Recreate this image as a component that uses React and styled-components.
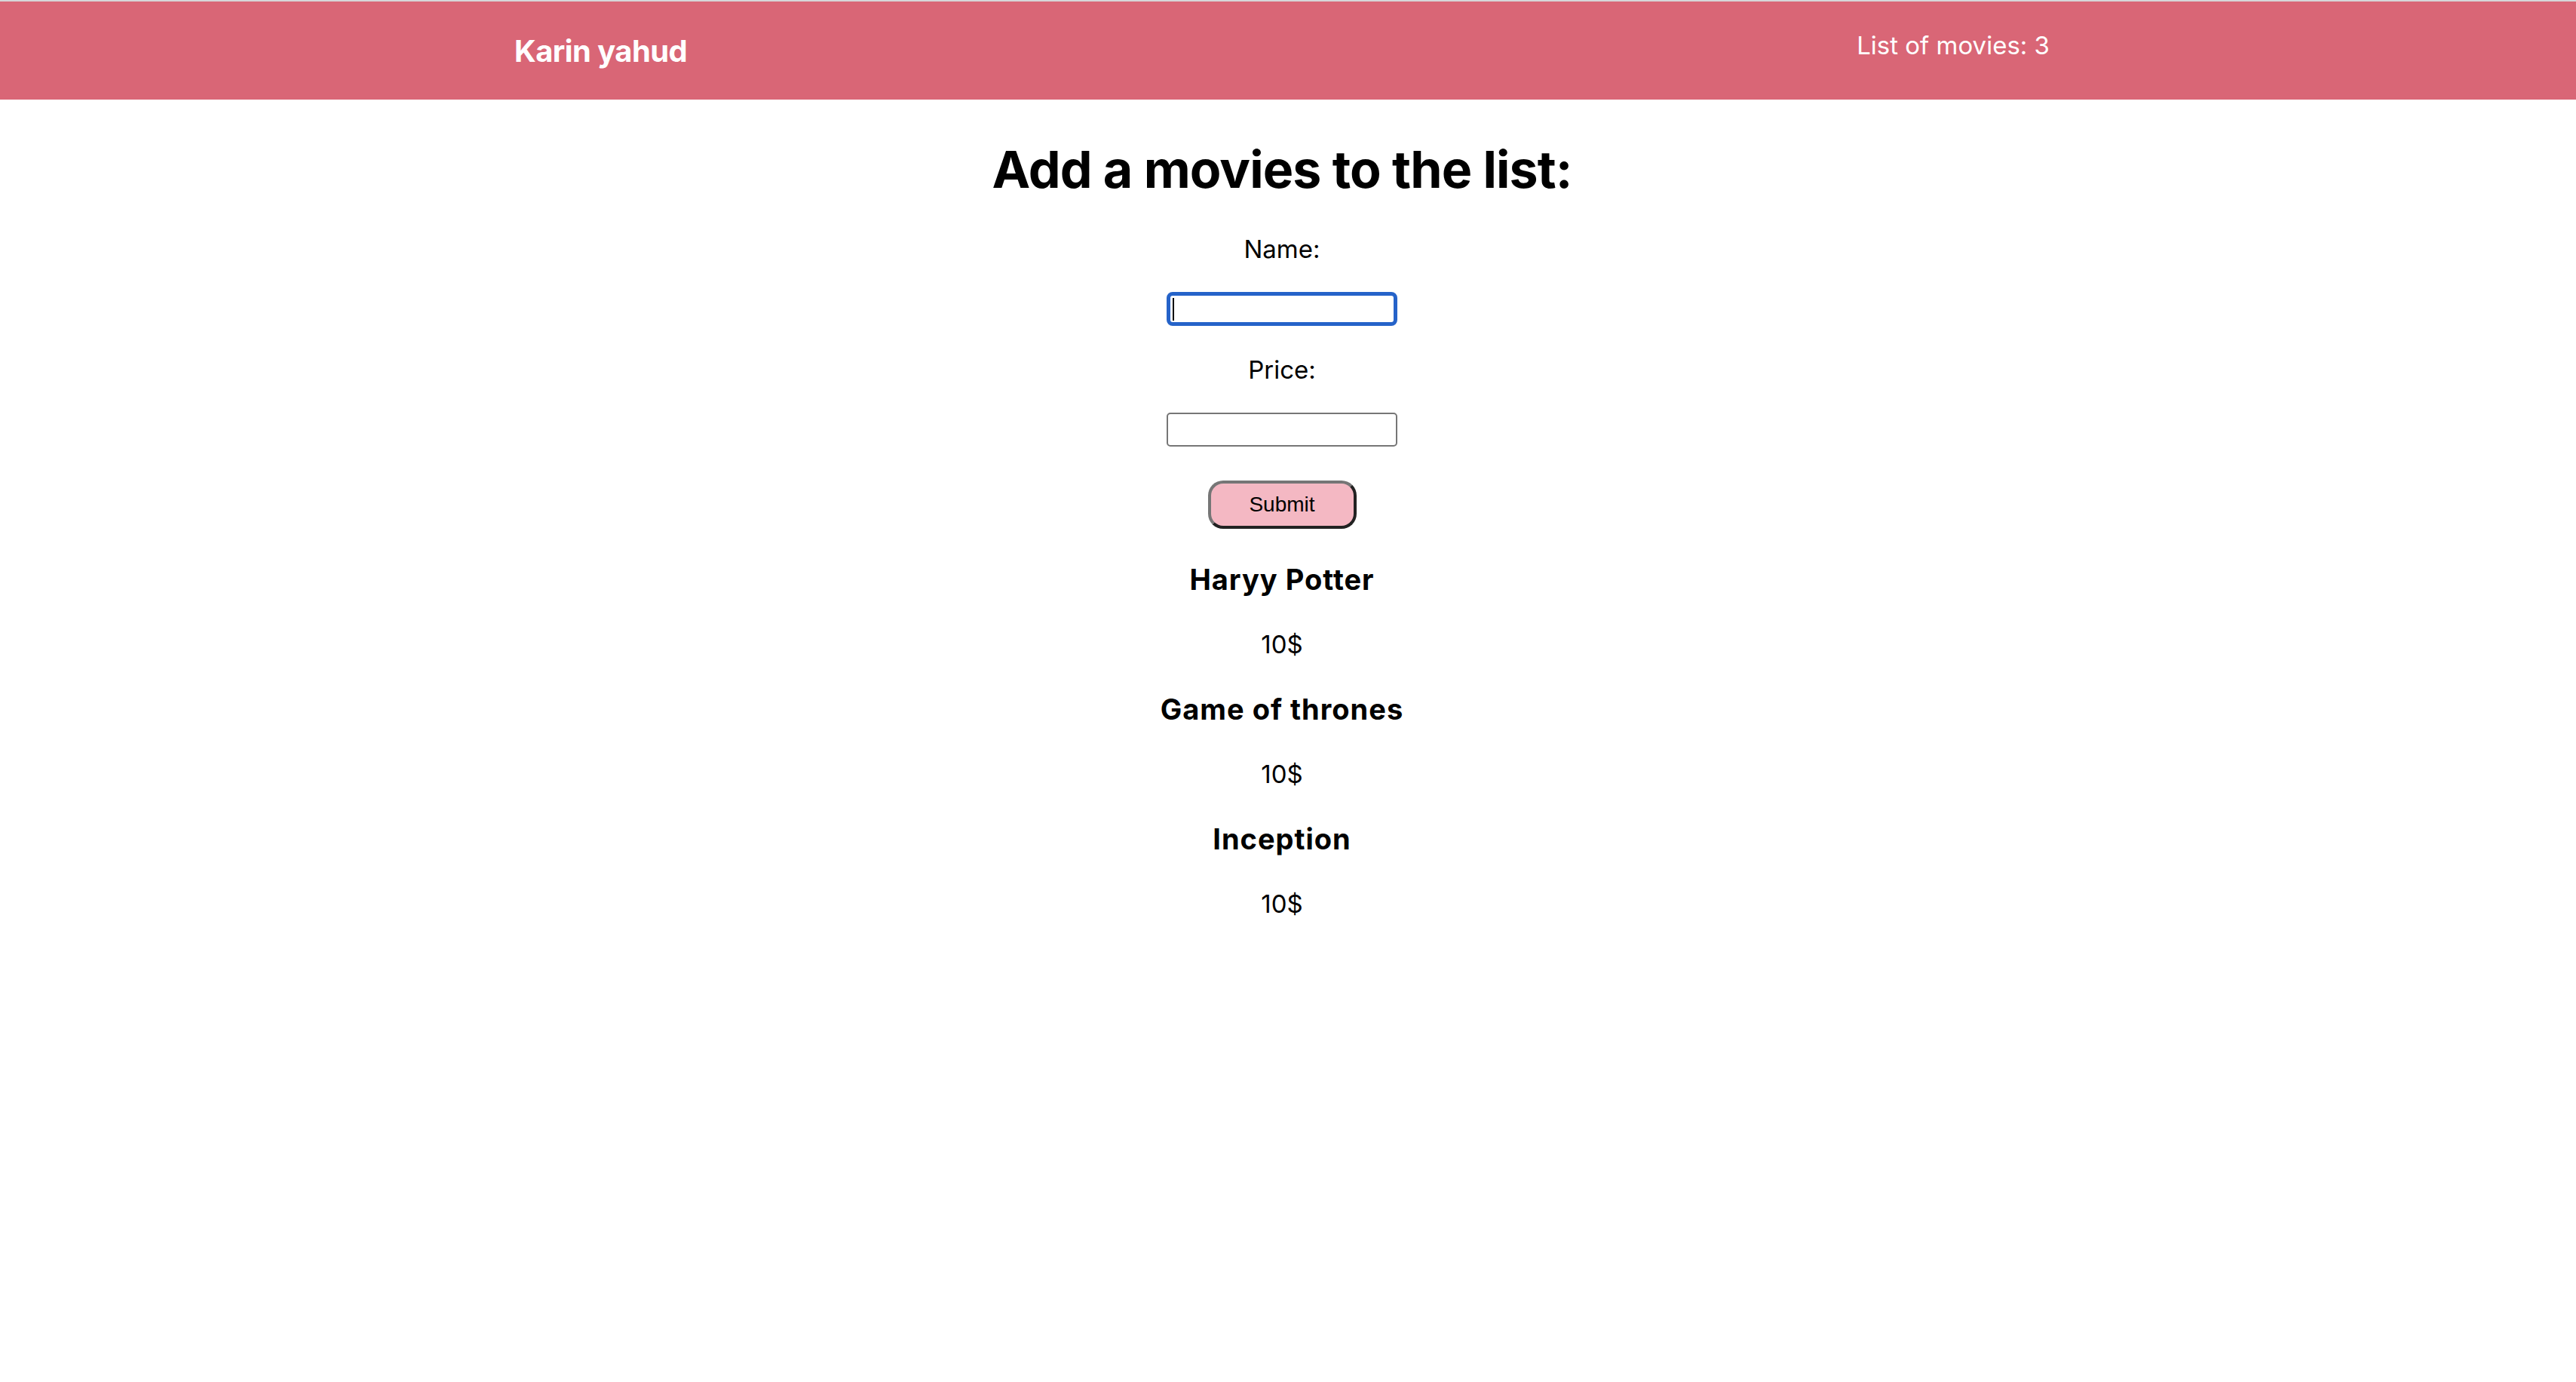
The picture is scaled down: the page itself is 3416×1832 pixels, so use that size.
import React from "react";
import styled, { createGlobalStyle } from "styled-components";

const GlobalStyle = createGlobalStyle`
  html, body {
    margin: 0;
    padding: 0;
    background: #ffffff;
  }
  body {
    font-family: Inter, "Noto Sans", sans-serif;
    color: #000000;
  }
  * { box-sizing: border-box; }
`;

const Page = styled.div`
  min-height: 1832px;
  background: #ffffff;
`;

const Header = styled.header`
  height: 132px;
  border-top: 2px solid #d6d6d8;
  background: #d96676;
  padding-right: 16px;
`;

const HeaderBar = styled.div`
  width: 2036px;
  margin: 0 auto;
  padding-top: 38px;
  display: flex;
  justify-content: space-between;
  align-items: flex-start;
  color: #ffffff;
`;

const Brand = styled.div`
  margin-top: 3px;
  font-size: 40px;
  line-height: 50px;
  font-weight: 700;
  letter-spacing: -0.6px;
`;

const Counter = styled.div`
  font-size: 33px;
  line-height: 40px;
  font-weight: 400;
`;

const Main = styled.main`
  display: flex;
  flex-direction: column;
  align-items: center;
  padding: 50px 16px 0 0;
  text-align: center;
`;

const Title = styled.h1`
  margin: 0 0 44px;
  font-size: 68px;
  line-height: 84px;
  font-weight: 700;
  letter-spacing: -0.9px;
`;

const Form = styled.form`
  display: flex;
  flex-direction: column;
  align-items: center;
  gap: 38px;
`;

const Field = styled.div`
  display: flex;
  flex-direction: column;
  align-items: center;
  gap: 37px;
`;

const Label = styled.label`
  font-size: 33px;
  line-height: 40px;
`;

const InputWrap = styled.div`
  position: relative;
  width: 306px;
  height: 45px;
`;

const Input = styled.input`
  display: block;
  width: 100%;
  height: 100%;
  margin: 0;
  padding: 0 3px;
  background: #ffffff;
  border: ${(p) => (p.$focused ? "5px solid #2563c9" : "2px solid #767676")};
  border-radius: ${(p) => (p.$focused ? "8px" : "5px")};
  outline: none;
  font-family: inherit;
  font-size: 26px;
  caret-color: transparent;
`;

const Caret = styled.span`
  position: absolute;
  left: 8px;
  top: 8px;
  width: 2px;
  height: 30px;
  background: #000000;
`;

const SubmitButton = styled.button`
  margin-top: 7px;
  width: 197px;
  height: 64px;
  padding: 0;
  background: #f4b8c3;
  border: 4px solid;
  border-color: #767676 #222222 #222222 #767676;
  border-radius: 20px;
  font-family: "Liberation Sans", Arial, sans-serif;
  font-size: 28px;
  color: #000000;
`;

const MovieList = styled.section`
  margin-top: 45px;
  display: flex;
  flex-direction: column;
  align-items: center;
  gap: 44px;
`;

const Movie = styled.article`
  display: flex;
  flex-direction: column;
  align-items: center;
  gap: 43px;
`;

const MovieName = styled.h3`
  margin: 0;
  font-size: 38px;
  line-height: 45px;
  font-weight: 700;
  letter-spacing: 1px;
`;

const MoviePrice = styled.p`
  margin: 0;
  font-size: 33px;
  line-height: 40px;
`;

const movies = [
  { name: "Haryy Potter", price: 10 },
  { name: "Game of thrones", price: 10 },
  { name: "Inception", price: 10 },
];

export default function App() {
  return (
    <Page>
      <GlobalStyle />
      <Header>
        <HeaderBar>
          <Brand>Karin yahud</Brand>
          <Counter>List of movies: {movies.length}</Counter>
        </HeaderBar>
      </Header>
      <Main>
        <Title>Add a movies to the list:</Title>
        <Form onSubmit={(e) => e.preventDefault()}>
          <Field>
            <Label htmlFor="name">Name:</Label>
            <InputWrap>
              <Input id="name" type="text" $focused />
              <Caret />
            </InputWrap>
          </Field>
          <Field>
            <Label htmlFor="price">Price:</Label>
            <InputWrap>
              <Input id="price" type="text" />
            </InputWrap>
          </Field>
          <SubmitButton type="submit">Submit</SubmitButton>
        </Form>
        <MovieList>
          {movies.map((m) => (
            <Movie key={m.name}>
              <MovieName>{m.name}</MovieName>
              <MoviePrice>{m.price}$</MoviePrice>
            </Movie>
          ))}
        </MovieList>
      </Main>
    </Page>
  );
}
